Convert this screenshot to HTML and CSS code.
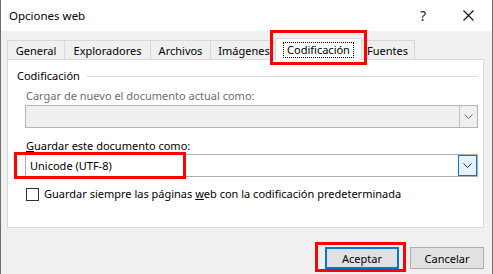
FILE: index.html
```html
<!DOCTYPE html>
<html lang="es">
<head>
<meta charset="utf-8">
<title>Opciones web</title>
<link rel="stylesheet" href="styles.css">
</head>
<body>
<div class="window">
  <div class="titlebar">
    <span class="title">Opciones web</span>
    <span class="help">?</span>
    <span class="close">
      <svg width="11" height="11" viewBox="0 0 11 11"><path d="M0.5 0.5 L10.5 10.5 M10.5 0.5 L0.5 10.5" stroke="#111" stroke-width="1.1" fill="none"/></svg>
    </span>
  </div>
  <div class="content">
    <div class="tabs">
      <div class="tab t-general">General</div>
      <div class="tab t-explo">Exploradores</div>
      <div class="tab t-arch">Archivos</div>
      <div class="tab t-img">Imágenes</div>
      <div class="tab tab-active"><span class="focus">Codificación</span></div>
      <div class="tab t-fuentes">Fuentes</div>
    </div>
    <div class="panel">
      <div class="group-head"><span>Codificación</span><span class="rule"></span></div>
      <div class="label disabled">Cargar de nuevo el documento actual como:</div>
      <div class="combo combo-disabled">
        <span class="combo-text"></span>
        <span class="combo-btn">
          <svg width="9" height="5" viewBox="0 0 9 5"><path d="M0.5 0.5 L4.5 4.5 L8.5 0.5" stroke="#666" stroke-width="1" fill="none"/></svg>
        </span>
      </div>
      <div class="label label2"><u>G</u>uardar este documento como:</div>
      <div class="combo">
        <span class="combo-text">Unicode (UTF-8)</span>
        <span class="combo-btn combo-btn-focus">
          <svg width="9" height="5" viewBox="0 0 9 5"><path d="M0.5 0.5 L4.5 4.5 L8.5 0.5" stroke="#222" stroke-width="1" fill="none"/></svg>
        </span>
      </div>
      <div class="check-row">
        <span class="checkbox"></span>
        <span>Guardar siempre las páginas <u>w</u>eb con la codificación predeterminada</span>
      </div>
    </div>
    <div class="buttons">
      <button class="btn btn-default">Aceptar</button>
      <button class="btn">Cancelar</button>
    </div>
  </div>
  <div class="mark mark-tab"></div>
  <div class="mark mark-combo"></div>
  <div class="mark mark-ok"></div>
</div>
</body>
</html>
```
FILE: styles.css
```css
html, body {
  margin: 0;
  padding: 0;
}
body {
  width: 493px;
  height: 274px;
  overflow: hidden;
  font-family: "Noto Sans", "Open Sans", sans-serif;
  font-size: 11px;
  color: #000;
  background: #f0f0f0;
}
.window {
  position: relative;
  width: 493px;
  height: 274px;
  box-sizing: border-box;
  border-left: 1px solid #6e6e6e;
  border-right: 1px solid #6e6e6e;
  background: #f0f0f0;
}
.titlebar {
  height: 31px;
  background: #fff;
  display: flex;
  align-items: center;
  padding-left: 8px;
}
.title {
  flex: 1;
  font-size: 11.5px;
  line-height: 16px;
}
.help {
  font-size: 14px;
  width: 12px;
  margin-right: 34px;
  text-align: center;
  color: #222;
}
.close {
  width: 11px;
  height: 11px;
  margin-right: 18px;
  display: flex;
}
.content {
  padding: 7px 8px 0 6px;
}
.tabs {
  display: flex;
  height: 22px;
  position: relative;
  z-index: 1;
  margin-bottom: -1px;
}
.tab {
  box-sizing: border-box;
  margin-top: 2px;
  height: 19px;
  border: 1px solid #d9d9d9;
  border-bottom: none;
  border-right: none;
  background: #f0f0f0;
  line-height: 19px;
  text-align: center;
  white-space: nowrap;
}
.t-general { width: 57px; }
.t-explo { width: 86px; }
.t-arch { width: 60px; }
.t-img { width: 67px; margin-right: -2px; }
.t-fuentes { width: 55px; border-right: 1px solid #d9d9d9; margin-left: -2px; }
.tab-active {
  position: relative;
  z-index: 2;
  margin-top: 0;
  height: 22px;
  width: 87px;
  background: #fff;
  border-right: 1px solid #d9d9d9;
  padding-top: 3px;
  line-height: 16px;
}
.focus {
  display: inline-block;
  border: 1px dotted #000;
  padding: 0 3px;
  line-height: 14px;
}
.panel {
  box-sizing: border-box;
  height: 169px;
  border: 1px solid #d9d9d9;
  background: #fff;
  padding: 8px 5px 0 17px;
}
.group-head {
  display: flex;
  align-items: center;
  margin-left: -8px;
  line-height: 16px;
}
.rule {
  flex: 1;
  height: 1px;
  background: #dcdcdc;
  margin-left: 7px;
}
.label {
  margin-top: 4px;
  line-height: 16px;
  padding-left: 1px;
}
.label.disabled {
  color: #6d6d6d;
}
.label2 {
  margin-top: 10px;
}
.combo {
  box-sizing: border-box;
  height: 23px;
  margin-top: 1px;
  border: 1px solid #adadad;
  background: #fff;
  display: flex;
  align-items: center;
}
.label2 + .combo {
  margin-top: 0;
}
.combo-disabled {
  background: #efefef;
  border-color: #b4b4b4;
}
.combo-text {
  flex: 1;
  padding-left: 4px;
  line-height: 16px;
}
.combo-btn {
  box-sizing: border-box;
  width: 18px;
  height: 21px;
  display: flex;
  align-items: center;
  justify-content: center;
  border-left: 1px solid #c4c4c4;
}
.combo-btn-focus {
  width: 19px;
  height: 21px;
  border: 1px solid #0078d7;
  background: #e5f1fb;
}
.check-row {
  display: flex;
  align-items: center;
  margin-top: 9px;
  line-height: 16px;
}
.checkbox {
  box-sizing: border-box;
  width: 13px;
  height: 13px;
  border: 1px solid #333;
  background: #fff;
  margin-right: 5px;
  margin-left: 1px;
}
.buttons {
  display: flex;
  justify-content: flex-end;
  gap: 11px;
  padding-top: 19px;
}
.btn {
  box-sizing: border-box;
  width: 74px;
  height: 22px;
  border: 1px solid #adadad;
  background: #e1e1e1;
  font-family: inherit;
  font-size: 11px;
  color: #000;
  padding: 0;
  margin: 0;
}
.btn-default {
  border: 2px solid #0078d7;
}
.mark {
  position: absolute;
  box-sizing: border-box;
  border: 3px solid #f00;
  pointer-events: none;
  z-index: 5;
}
.mark-tab {
  left: 269px;
  top: 30px;
  width: 97px;
  height: 35px;
}
.mark-combo {
  left: 13px;
  top: 152px;
  width: 172px;
  height: 27px;
}
.mark-ok {
  left: 314px;
  top: 242px;
  width: 91px;
  height: 30px;
}
```
